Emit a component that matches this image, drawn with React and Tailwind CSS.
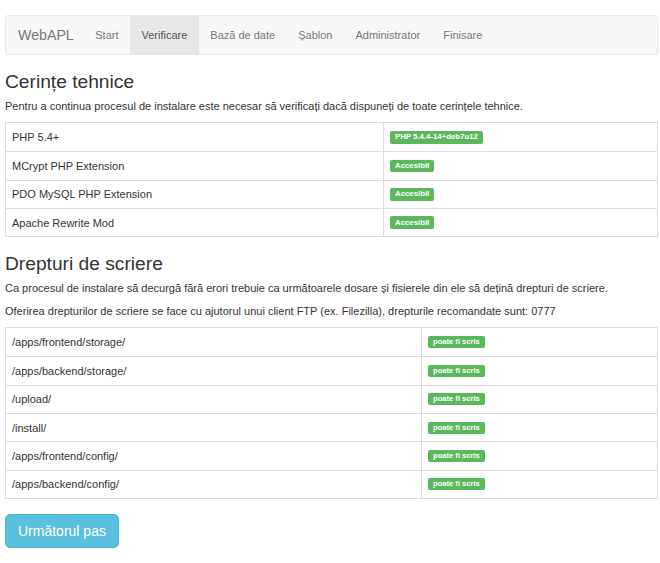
import React from 'react';

const navItems = ['Start', 'Verificare', 'Bază de date', 'Șablon', 'Administrator', 'Finisare'];

const requirements = [
  ['PHP 5.4+', 'PHP 5.4.4-14+deb7u12'],
  ['MCrypt PHP Extension', 'Accesibil'],
  ['PDO MySQL PHP Extension', 'Accesibil'],
  ['Apache Rewrite Mod', 'Accesibil'],
];

const folders = [
  '/apps/frontend/storage/',
  '/apps/backend/storage/',
  '/upload/',
  '/install/',
  '/apps/frontend/config/',
  '/apps/backend/config/',
];

const Badge = ({ children, small }) => (
  <span
    className={`inline-block bg-[#5cb85c] text-white font-bold rounded-[2px] leading-none ${
      small ? 'text-[7.6px] px-[5px] pt-[2px] pb-[2.5px]' : 'text-[7.8px] px-[5px] pt-[2.5px] pb-[2.5px]'
    }`}
  >
    {children}
  </span>
);

const Table = ({ rows, firstCol }) => (
  <div className="border border-[#dddddd]">
    {rows.map(([label, value], i) => (
      <div key={i} className={`flex h-[28.3px] ${i > 0 ? 'border-t border-[#dddddd]' : ''}`}>
        <div className={`${firstCol} shrink-0 border-r border-[#dddddd] px-[6px] flex items-center`}>
          {label}
        </div>
        <div className="px-[6px] flex items-center">{value}</div>
      </div>
    ))}
  </div>
);

const App = () => {
  return (
    <div
      className="w-[660px] min-h-[563px] bg-white text-[#333333] text-[11px] leading-[16px] pt-[15px]"
      style={{ fontFamily: '"Liberation Sans", Arial, sans-serif' }}
    >
      <div className="ml-[5px] w-[653px]">
        {/* Navbar */}
        <nav className="h-[40px] bg-[#f8f8f8] border border-[#e7e7e7] rounded-[3px] flex items-stretch text-[#777777]">
          <div className="pl-[12px] pr-[10px] flex items-center text-[14.2px]">WebAPL</div>
          {navItems.map((item) => (
            <div
              key={item}
              className={`px-[11.5px] flex items-center ${
                item === 'Verificare' ? 'bg-[#e7e7e7] text-[#555555]' : ''
              }`}
            >
              {item}
            </div>
          ))}
        </nav>

        {/* Cerinte tehnice */}
        <h3 className="mt-[16px] text-[19.2px] leading-[21px] font-normal">Cerințe tehnice</h3>
        <p className="mt-[6px] mb-[8px]">
          Pentru a continua procesul de instalare este necesar să verificați dacă dispuneți de toate cerințele tehnice.
        </p>
        <Table
          firstCol="w-[378px]"
          rows={requirements.map(([a, b]) => [a, <Badge>{b}</Badge>])}
        />

        {/* Drepturi de scriere */}
        <h3 className="mt-[16px] text-[19.2px] leading-[21px] font-normal">Drepturi de scriere</h3>
        <p className="mt-[6px]">
          Ca procesul de instalare să decurgă fără erori trebuie ca următoarele dosare și fisierele din ele să dețină drepturi de scriere.
        </p>
        <p className="mt-[7px] mb-[8px]">
          Oferirea drepturilor de scriere se face cu ajutorul unui client FTP (ex. Filezilla), drepturile recomandate sunt: 0777
        </p>
        <Table
          firstCol="w-[416px]"
          rows={folders.map((f) => [f, <Badge small>poate fi scris</Badge>])}
        />

        <button className="mt-[15px] h-[34px] px-[12px] bg-[#5bc0de] border border-[#46b8da] rounded-[5px] text-white text-[14px]">
          Următorul pas
        </button>
      </div>
    </div>
  );
};

export default App;
